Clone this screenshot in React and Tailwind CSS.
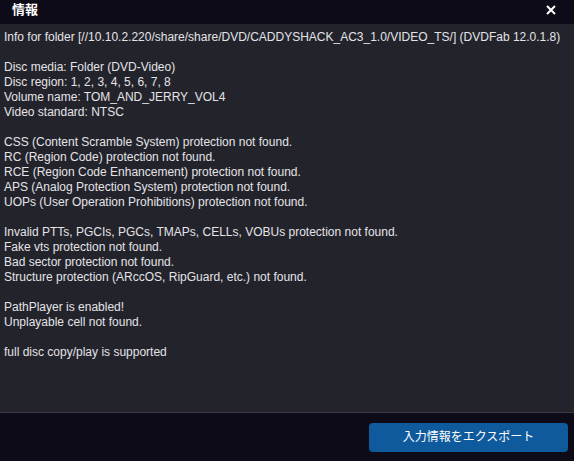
import React from "react";

const LINES = [
  "Info for folder [//10.10.2.220/share/share/DVD/CADDYSHACK_AC3_1.0/VIDEO_TS/] (DVDFab 12.0.1.8)",
  "",
  "Disc media: Folder (DVD-Video)",
  "Disc region: 1, 2, 3, 4, 5, 6, 7, 8",
  "Volume name: TOM_AND_JERRY_VOL4",
  "Video standard: NTSC",
  "",
  "CSS (Content Scramble System) protection not found.",
  "RC (Region Code) protection not found.",
  "RCE (Region Code Enhancement) protection not found.",
  "APS (Analog Protection System) protection not found.",
  "UOPs (User Operation Prohibitions) protection not found.",
  "",
  "Invalid PTTs, PGCIs, PGCs, TMAPs, CELLs, VOBUs protection not found.",
  "Fake vts protection not found.",
  "Bad sector protection not found.",
  "Structure protection (ARccOS, RipGuard, etc.) not found.",
  "",
  "PathPlayer is enabled!",
  "Unplayable cell not found.",
  "",
  "full disc copy/play is supported",
];

const App = () => {
  return (
    <div
      className="w-[574px] h-[461px] flex flex-col bg-[#0d0b17] text-white overflow-hidden"
      style={{ fontFamily: '"Liberation Sans", Arial, "Noto Sans CJK JP", sans-serif' }}
    >
      {/* title bar */}
      <div className="h-[24px] flex items-center justify-between pl-[12px] pr-[18px] pb-[4px] shrink-0">
        <span className="text-[13px] font-bold">情報</span>
        <svg width="10" height="10" viewBox="0 0 10 10">
          <path d="M1 1 L9 9 M9 1 L1 9" stroke="#fff" strokeWidth="2" />
        </svg>
      </div>

      {/* info text */}
      <div className="h-[389px] shrink-0 bg-[#23232b] border-b border-[#3a3a44] pt-[6px] pl-[4px] text-[12px] leading-[15px] text-[#e4e4e8] whitespace-pre">
        {LINES.map((line, i) => (
          <div key={i} className="h-[15px]">{line}</div>
        ))}
      </div>

      {/* footer */}
      <div className="flex-1 flex items-center justify-end pr-[6px]">
        <button className="w-[199px] h-[29px] rounded-[4px] bg-[#0f5a9c] text-[12px] text-white">
          入力情報をエクスポート
        </button>
      </div>
    </div>
  );
};

export default App;
